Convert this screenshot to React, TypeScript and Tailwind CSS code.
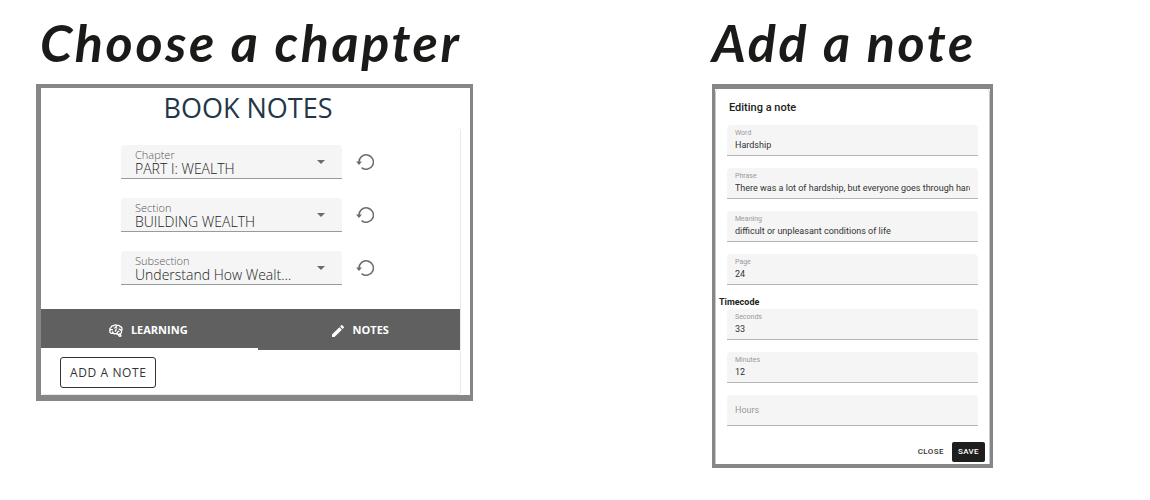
import { useState } from "react";
import { MdEdit } from "react-icons/md";

function BrainIcon() {
  return (
    <svg viewBox="0 0 24 24" className="size-4" fill="currentColor" aria-hidden="true">
      <path d="M21.33,12.91C21.42,14.46 20.71,15.95 19.44,16.86L20.21,18.35C20.44,18.8 20.47,19.33 20.27,19.8C20.08,20.27 19.69,20.64 19.21,20.8L18.42,21.05C18.25,21.11 18.06,21.14 17.88,21.14C17.37,21.14 16.89,20.91 16.56,20.5L14.44,18C13.55,17.85 12.71,17.47 12,16.9C11.5,17.05 11,17.13 10.5,17.13C9.62,17.13 8.74,16.86 8,16.34C7.47,16.5 6.93,16.57 6.38,16.56C5.59,16.57 4.81,16.41 4.08,16.11C2.65,15.47 1.7,14.07 1.65,12.5C1.57,11.78 1.69,11.05 2,10.39C1.71,9.64 1.68,8.82 1.93,8.06C2.3,7.11 3,6.32 3.87,5.82C4.45,4.13 6.08,3 7.87,3.12C9.47,1.62 11.92,1.46 13.7,2.75C14.12,2.64 14.56,2.58 15,2.58C16.36,2.55 17.65,3.15 18.5,4.22C20.54,4.75 22,6.57 22.08,8.69C22.13,9.8 21.83,10.89 21.22,11.82C21.29,12.18 21.33,12.54 21.33,12.91M16.33,11.5C16.9,11.57 17.35,12 17.35,12.57A1,1 0 0,1 16.35,13.57H15.72C15.4,14.47 14.84,15.26 14.1,15.86C14.35,15.95 14.61,16 14.87,16.07C20,16 19.4,12.87 19.4,12.82C19.34,11.39 18.14,10.27 16.71,10.33A1,1 0 0,1 15.71,9.33A1,1 0 0,1 16.71,8.33C17.94,8.36 19.12,8.82 20.04,9.63C20.09,9.34 20.12,9.04 20.12,8.74C20.06,7.5 19.5,6.42 17.25,6.21C16,3.25 12.85,4.89 12.85,5.81V5.81C12.82,6.04 13.06,6.53 13.1,6.56A1,1 0 0,1 14.1,7.56C14.1,8.11 13.65,8.56 13.1,8.56V8.56C12.57,8.54 12.07,8.34 11.67,8C11.19,8.31 10.64,8.5 10.07,8.56V8.56C9.5,8.61 9.03,8.21 9,7.66C8.92,7.1 9.33,6.61 9.88,6.56C10.04,6.54 10.82,6.42 10.82,5.79V5.79C10.82,5.13 11.07,4.5 11.5,4C10.58,3.75 9.59,4.08 8.59,5.29C6.75,5 6,5.25 5.45,7.2C4.5,7.67 4,8 3.78,9C4.86,8.78 5.97,8.87 7,9.25C7.5,9.44 7.78,10 7.59,10.54C7.4,11.06 6.82,11.32 6.3,11.13C5.57,10.81 4.75,10.79 4,11.07C3.68,11.34 3.68,11.9 3.68,12.34C3.68,13.08 4.05,13.77 4.68,14.17C5.21,14.44 5.8,14.58 6.39,14.57C6.24,14.31 6.11,14.04 6,13.76C5.81,13.22 6.1,12.63 6.64,12.44C7.18,12.25 7.77,12.54 7.96,13.08C8.36,14.22 9.38,15 10.58,15.13C11.95,15.06 13.17,14.25 13.77,13C14,11.62 15.11,11.5 16.33,11.5M18.33,18.97L17.71,17.67L17,17.83L18,19.08L18.33,18.97M13.68,10.36C13.7,9.83 13.3,9.38 12.77,9.33C12.06,9.29 11.37,9.53 10.84,10C10.27,10.58 9.97,11.38 10,12.19A1,1 0 0,0 11,13.19C11.57,13.19 12,12.74 12,12.19C12,11.92 12.07,11.65 12.23,11.43C12.35,11.33 12.5,11.28 12.66,11.28C13.21,11.31 13.68,10.9 13.68,10.36Z" />
    </svg>
  );
}

function ResetIcon() {
  return (
    <svg viewBox="0 0 18 18" className="size-[18px]" fill="none" aria-hidden="true">
      <path d="M3 9.5A7.2 7.2 0 1 1 5.6 14.6" stroke="currentColor" strokeWidth="1.5" />
      <path d="M0 8.6H6L3 12Z" fill="currentColor" />
    </svg>
  );
}

const pickers = [
  { id: "chapter", label: "Chapter", value: "PART I: WEALTH" },
  { id: "section", label: "Section", value: "BUILDING WEALTH" },
  { id: "subsection", label: "Subsection", value: "Understand How Wealth Is Created" },
];

function Picker({ id, label, value }: { id: string; label: string; value: string }) {
  return (
    <div className="flex items-center gap-3.5">
      <div className="relative h-[34px] min-w-0 flex-1 rounded-t border-b border-[#9a9a9a] bg-[#f5f5f5]">
        <label htmlFor={id} className="pointer-events-none absolute top-1 left-3.5 text-[11px] leading-3 font-light text-[#555]">
          {label}
        </label>
        <select
          id={id}
          defaultValue={value}
          className="h-full w-full appearance-none truncate bg-transparent pt-3.5 pr-11 pl-3.5 text-sm leading-5 font-light text-[#222] outline-none"
        >
          <option>{value}</option>
        </select>
        <svg viewBox="0 0 8 4" className="pointer-events-none absolute top-[15px] right-[17px] h-1 w-2" aria-hidden="true">
          <path d="M0 0H8L4 4Z" fill="#6b6b6b" />
        </svg>
      </div>
      <button type="button" aria-label={`Reset ${label}`} className="text-[#6b6b6b]">
        <ResetIcon />
      </button>
    </div>
  );
}

function Field({ label, value = "" }: { label: string; value?: string }) {
  const id = `note-${label.toLowerCase()}`;
  const base = "block h-[31px] w-full rounded-t-sm border-b border-[#b5b5b5] bg-[#f5f5f5] px-2 text-[9px] text-[#333] outline-none placeholder:text-[#999]";
  if (!value) {
    return <input id={id} aria-label={label} placeholder={label} className={base} />;
  }
  return (
    <div className="relative">
      <label htmlFor={id} className="absolute top-1 left-2 text-[7px] leading-2 text-[#999]">
        {label}
      </label>
      <input id={id} defaultValue={value} className={`${base} pt-2.5`} />
    </div>
  );
}

const titleClass = "h-[84px] pt-2.5 text-[52px] leading-[64px] font-bold italic tracking-wider whitespace-nowrap text-[#1a1a18] font-['Lato',sans-serif]";

export default function App() {
  const [tab, setTab] = useState("learning");
  return (
    <main className="grid min-h-screen grid-cols-[437fr_281fr] items-start gap-x-[239px] bg-white pr-[157px] pl-9">
      <section>
        <h1 className={`${titleClass} pl-1`}>Choose a chapter</h1>
        <div className="border-t-4 border-r-3 border-b-6 border-l-5 border-[#868686] pr-[9px] font-['Open_Sans',sans-serif]">
          <h2 className="h-10 pr-1.5 text-center text-[27px] leading-10 font-medium text-[#22364a]">BOOK NOTES</h2>
          <div className="rounded border-r border-b border-[#e8e8e8]">
            <div className="flex flex-col gap-[19px] pt-[17px] pr-[86px] pb-6 pl-20">
              {pickers.map((p) => (
                <Picker key={p.id} {...p} />
              ))}
            </div>
            <div role="tablist" className="grid h-[41px] grid-cols-[218fr_202fr] bg-[#606060] text-[11px] font-bold text-white">
              <button
                type="button"
                role="tab"
                aria-selected={tab === "learning"}
                onClick={() => setTab("learning")}
                className={`flex items-center justify-center gap-[7px] border-b-2 pt-1 pr-1 ${tab === "learning" ? "border-white" : "border-transparent"}`}
              >
                <BrainIcon />
                LEARNING
              </button>
              <button
                type="button"
                role="tab"
                aria-selected={tab === "notes"}
                onClick={() => setTab("notes")}
                className={`flex items-center justify-center gap-[7px] border-b-2 pt-1 ${tab === "notes" ? "border-white" : "border-transparent"}`}
              >
                <MdEdit className="size-4" />
                NOTES
              </button>
            </div>
            <div className="px-[19px] pt-[7px] pb-1.5">
              <button type="button" className="block h-[31px] rounded-[3px] border border-[#333] px-[9px] text-xs tracking-wider text-[#333]">
                ADD A NOTE
              </button>
            </div>
          </div>
        </div>
      </section>

      <section>
        <h1 className={titleClass}>Add a note</h1>
        <div className="border-t-5 border-r-3 border-b-4 border-l-3 border-[#868686] font-['Roboto',sans-serif]">
          <form onSubmit={(e) => e.preventDefault()} className="rounded-t-sm border-x border-[#c8c8c8] px-[11px] pt-2">
            <h2 className="h-7 pt-px pl-0.5 text-[11px] leading-5 font-medium text-[#222]">Editing a note</h2>
            <div className="flex flex-col gap-3">
              <Field label="Word" value="Hardship" />
              <Field label="Phrase" value="There was a lot of hardship, but everyone goes through hardship sometimes" />
              <Field label="Meaning" value="difficult or unpleasant conditions of life" />
              <Field label="Page" value="24" />
            </div>
            <fieldset className="mt-[9px]">
              <legend className="-ml-2 h-[15px] text-[9px] leading-4 font-bold text-[#222]">Timecode</legend>
              <div className="flex flex-col gap-3">
                <Field label="Seconds" value="33" />
                <Field label="Minutes" value="12" />
                <Field label="Hours" />
              </div>
            </fieldset>
            <div className="-mr-[7px] flex items-center justify-end gap-2 pt-4 pb-0.5 text-[8px] font-medium">
              <button type="button" className="h-5 tracking-wider text-[#333]">CLOSE</button>
              <button type="submit" className="h-5 rounded-xs bg-[#1e1e1e] px-1.5 tracking-wider text-white">SAVE</button>
            </div>
          </form>
        </div>
      </section>
    </main>
  );
}
